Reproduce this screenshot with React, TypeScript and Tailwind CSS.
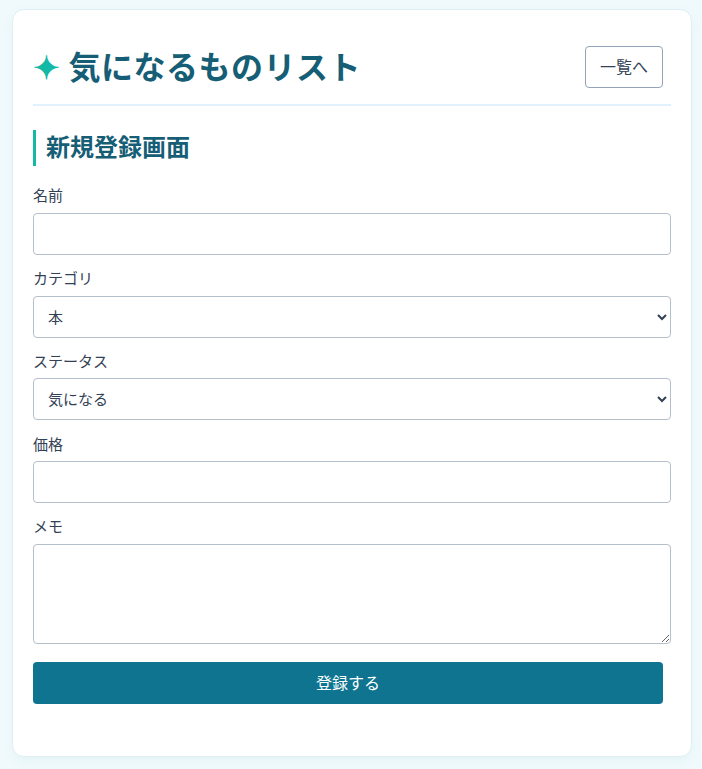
export default function App() {
  return (
    <div className="min-h-[769px] bg-[#f0fafc] pr-[10px] pl-[12px] pt-[9px] font-['Noto_Sans','Noto_Sans_CJK_JP',sans-serif] text-[#334155]">
      <div className="h-[748px] rounded-[12px] border border-[#dff0f5] bg-white px-[20px] pt-[33px] shadow-[0_4px_12px_rgba(15,110,140,0.05)]">
        <header className="flex items-center justify-between border-b-2 border-[#e0f2fe] pr-[8px] pb-[13px]">
          <h1 className="flex items-center gap-[8px] text-[32px] leading-[48px] font-bold tracking-[0.5px] text-[#155e75]">
            <span className="text-[#14b8a6]">✦</span>
            気になるものリスト
          </h1>
          <button className="h-[42px] w-[78px] rounded-[4px] border border-[#94a3b8] bg-white text-[16px] text-[#334155]">一覧へ</button>
        </header>
        <h2 className="mt-[24px] mb-[18.45px] border-l-[3px] border-[#14b8a6] pb-[2px] pl-[10px] text-[24px] leading-[34px] font-bold text-[#155e75]">新規登録画面</h2>
        <form className="flex flex-col">
          <label className="mb-[6px] text-[15px] leading-[22.5px]">名前</label>
          <input className="mb-[12.25px] h-[42px] rounded-[4px] border border-[#b4bfcc] bg-white px-[14px]" />
          <label className="mb-[6px] text-[15px] leading-[22.5px]">カテゴリ</label>
          <select className="mb-[12.25px] h-[42px] rounded-[4px] border border-[#b4bfcc] bg-white px-[10px] text-[15px]"><option>本</option></select>
          <label className="mb-[6px] text-[15px] leading-[22.5px]">ステータス</label>
          <select className="mb-[12.25px] h-[42px] rounded-[4px] border border-[#b4bfcc] bg-white px-[10px] text-[15px]"><option>気になる</option></select>
          <label className="mb-[6px] text-[15px] leading-[22.5px]">価格</label>
          <input className="mb-[12.25px] h-[42px] rounded-[4px] border border-[#b4bfcc] bg-white px-[14px]" />
          <label className="mb-[6px] text-[15px] leading-[22.5px]">メモ</label>
          <textarea className="mb-[18px] h-[100px] rounded-[4px] border border-[#b4bfcc] bg-white px-[14px]" />
          <button type="button" className="mr-[8px] h-[42px] rounded-[4px] bg-[#0e7490] text-[16px] text-white">登録する</button>
        </form>
      </div>
    </div>
  );
}
